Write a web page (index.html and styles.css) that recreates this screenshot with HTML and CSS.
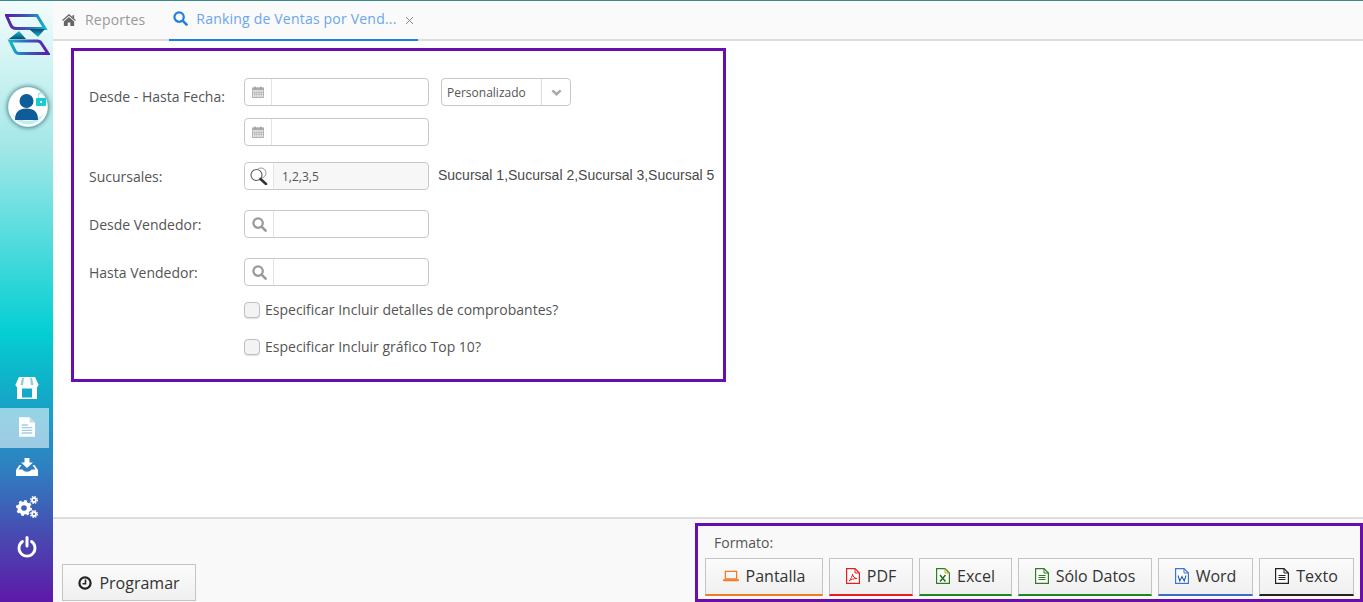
FILE: index.html
```html
<!DOCTYPE html>
<html lang="es">
<head>
<meta charset="utf-8">
<title>Ranking de Ventas por Vendedor</title>
<link rel="stylesheet" href="styles.css">
</head>
<body>
<aside class="sidebar">
  <svg class="logo" viewBox="0 0 45 42" width="45" height="42">
    <defs>
      <linearGradient id="lg1" x1="0" x2="1"><stop offset="0" stop-color="#5a1fa8"/><stop offset=".55" stop-color="#3a5ab8"/><stop offset="1" stop-color="#12b5c9"/></linearGradient>
      <linearGradient id="lg2" x1="0" x2="1"><stop offset="0" stop-color="#12b5c9"/><stop offset=".5" stop-color="#3a5ab8"/><stop offset="1" stop-color="#5a1fa8"/></linearGradient>
      <linearGradient id="lg3" x1="0" x2="0" y1="0" y2="1"><stop offset="0" stop-color="#18c0c8"/><stop offset="1" stop-color="#0a4a78"/></linearGradient>
      <linearGradient id="lg4" x1="0" x2="0" y1="0" y2="1"><stop offset="0" stop-color="#0a4a78"/><stop offset="1" stop-color="#18c0c8"/></linearGradient>
    </defs>
    <path d="M1.500 1.500H32L40 14.500H11Q7.500 14.500 6 11.500Z" fill="none" stroke="url(#lg1)" stroke-width="3"/>
    <path d="M5 27H32.500Q35 27 36.500 29.500L43 39.500H14Q11.500 39.500 10 37Z" fill="none" stroke="url(#lg2)" stroke-width="3"/>
    <path d="M4 25 14 17 21 25Z" fill="url(#lg3)"/>
    <path d="M24 15H40L33 23Z" fill="url(#lg4)"/>
  </svg>
  <div class="avatar">
    <svg viewBox="0 0 40 40" width="40" height="40">
      <circle cx="20" cy="20" r="19.500" fill="#fff"/>
      <path d="M4 26A17 17 0 0 0 36 26 20 20 0 0 1 4 26Z" fill="#bfeef0"/>
      <circle cx="18.500" cy="14" r="7" fill="#0f5c9a"/>
      <path d="M7 33C7 25 11 21.500 18.500 21.500S30 25 30 33Z" fill="#0f5c9a"/>
      <rect x="28" y="11" width="10" height="8" rx="1" fill="#12cdd4"/>
      <path d="M30.500 11V8.500A2.500 2.500 0 0 1 35.500 8.500" fill="none" stroke="#a5e5e8" stroke-width="1.300"/>
      <rect x="32" y="14" width="2" height="2" fill="#fff"/>
    </svg>
  </div>
  <nav class="side-nav">
    <a class="side-item side-store">
      <svg viewBox="0 0 24 24" width="24" height="24"><path d="M4 1H20L23.500 8.500Q23.500 11 21.500 11H2.500Q.5 11 .5 8.500Z" fill="#fff"/><path d="M2 11H22V23H2ZM7 12.500V21.500H17V12.500Z" fill="#fff" fill-rule="evenodd"/><path d="M7 2H9L8 9H5.500ZM15 2H17L18.500 9H16Z" fill="#2aa6c2" opacity=".55"/></svg>
    </a>
    <a class="side-item active">
      <svg viewBox="0 0 18 22" width="16" height="20"><path d="M0 0H12L18 6V22H0Z" fill="#fff"/><path d="M12 0V6H18Z" fill="#bfe0ea"/><path d="M3 8H10V9.500H3ZM3 11H15V12.500H3ZM3 14H15V15.500H3ZM3 17H15V18.500H3Z" fill="#9ccfe0"/></svg>
    </a>
    <a class="side-item">
      <svg viewBox="0 0 22 18" width="22" height="18"><path d="M8.500 0H13.500V4.500H17L11 10 5 4.500H8.500Z" fill="#fff"/><path d="M3.500 7H5.500L2.500 11.500H6.500C8 14.500 14 14.500 15.500 11.500H19.500L16.500 7H18.500L22 12V18H0V12Z" fill="#fff"/></svg>
    </a>
    <a class="side-item">
      <svg viewBox="0 0 22 22" width="22" height="22"><g fill="none" stroke="#fff"><circle cx="8" cy="12" r="4.700" stroke-width="3.800"/><circle cx="8" cy="12" r="7" stroke-width="2" stroke-dasharray="2.800 2.700"/><circle cx="18" cy="4" r="2" stroke-width="1.800"/><circle cx="18" cy="4" r="3.400" stroke-width="1.200" stroke-dasharray="1.600 1.070"/><circle cx="18" cy="18" r="2" stroke-width="1.800"/><circle cx="18" cy="18" r="3.400" stroke-width="1.200" stroke-dasharray="1.600 1.070"/></g></svg>
    </a>
    <a class="side-item">
      <svg viewBox="0 0 20 22" width="20" height="22"><path d="M5.500 5.500A8 8 0 1 0 14.500 5.500" fill="none" stroke="#fff" stroke-width="2.800" stroke-linecap="round"/><path d="M10 1.500V10" stroke="#fff" stroke-width="3" stroke-linecap="round"/></svg>
    </a>
  </nav>
</aside>

<div class="main">
  <header class="tabs">
    <a class="tab">
      <svg class="tab-icon" viewBox="0 0 16 14" width="14" height="12"><path d="M8 0 16 7 15 8.200 8 2 1 8.200 0 7ZM12 1.500H14V5L12 3.500Z" fill="#666"/><path d="M8 3.500 14 8.800V14H9.500V10H6.500V14H2V8.800Z" fill="#666"/></svg>
      <span>Reportes</span>
    </a>
    <a class="tab tab-active">
      <svg class="tab-icon" viewBox="0 0 16 16" width="15" height="15"><circle cx="6.500" cy="6.500" r="5" fill="none" stroke="#2080e0" stroke-width="2.400"/><path d="M10.500 10.500 14.500 14.500" stroke="#2080e0" stroke-width="2.800" stroke-linecap="round"/></svg>
      <span>Ranking de Ventas por Vend...</span>
      <svg class="tab-close" viewBox="0 0 9 9" width="9" height="9"><path d="M1 1 8 8M8 1 1 8" stroke="#888" stroke-width="1" fill="none"/></svg>
    </a>
  </header>

  <section class="content">
    <form class="panel">
      <div class="row row-date">
        <label class="lbl">Desde - Hasta Fecha:</label>
        <div class="field">
          <span class="addon addon-cal"><svg viewBox="0 0 13 13" width="12" height="12"><path d="M.5 2H12.500V12.500H.5Z" fill="#eee" stroke="#aaa"/><path d="M.5 2H12.500V4.500H.5Z" fill="#aaa"/><path d="M3 5V12M5.300 5V12M7.700 5V12M10 5V12M1 7H12M1 9H12" stroke="#aaa" stroke-width=".7"/><path d="M3.500 .5V3M9.500 .5V3" stroke="#999" stroke-width="1.200"/></svg></span>
          <span class="value"></span>
        </div>
        <div class="select">
          <span class="select-text">Personalizado</span>
          <span class="select-btn"><svg viewBox="0 0 12 8" width="11" height="7"><path d="M1.200 1.500 6 6 10.800 1.500" fill="none" stroke="#aaa" stroke-width="2.800"/></svg></span>
        </div>
      </div>
      <div class="row row-date2">
        <span class="lbl"></span>
        <div class="field">
          <span class="addon addon-cal"><svg viewBox="0 0 13 13" width="12" height="12"><path d="M.5 2H12.500V12.500H.5Z" fill="#eee" stroke="#aaa"/><path d="M.5 2H12.500V4.500H.5Z" fill="#aaa"/><path d="M3 5V12M5.300 5V12M7.700 5V12M10 5V12M1 7H12M1 9H12" stroke="#aaa" stroke-width=".7"/><path d="M3.500 .5V3M9.500 .5V3" stroke="#999" stroke-width="1.200"/></svg></span>
          <span class="value"></span>
        </div>
      </div>
      <div class="row row-suc">
        <label class="lbl">Sucursales:</label>
        <div class="field field-ro">
          <span class="addon addon-white"><svg viewBox="0 0 20 18" width="20" height="18"><circle cx="12" cy="6" r="5" fill="#fff" stroke="#999"/><circle cx="7.500" cy="8" r="5.500" fill="#fff" stroke="#666" stroke-width="1.200"/><path d="M11.500 12 17 17" stroke="#333" stroke-width="2.600" stroke-linecap="round"/></svg></span>
          <span class="value value-text">1,2,3,5</span>
        </div>
        <span class="desc">Sucursal 1,Sucursal 2,Sucursal 3,Sucursal 5</span>
      </div>
      <div class="row row-vend">
        <label class="lbl">Desde Vendedor:</label>
        <div class="field">
          <span class="addon"><svg viewBox="0 0 16 16" width="15" height="15"><circle cx="6.500" cy="6.500" r="5" fill="none" stroke="#999" stroke-width="2.400"/><path d="M10.500 10.500 14.500 14.500" stroke="#999" stroke-width="2.800" stroke-linecap="round"/></svg></span>
          <span class="value"></span>
        </div>
      </div>
      <div class="row row-vend">
        <label class="lbl">Hasta Vendedor:</label>
        <div class="field">
          <span class="addon"><svg viewBox="0 0 16 16" width="15" height="15"><circle cx="6.500" cy="6.500" r="5" fill="none" stroke="#999" stroke-width="2.400"/><path d="M10.500 10.500 14.500 14.500" stroke="#999" stroke-width="2.800" stroke-linecap="round"/></svg></span>
          <span class="value"></span>
        </div>
      </div>
      <div class="check check-first"><span class="box"></span><span class="check-text">Especificar Incluir detalles de comprobantes?</span></div>
      <div class="check"><span class="box"></span><span class="check-text">Especificar Incluir gráfico Top 10?</span></div>
    </form>
  </section>

  <footer class="footer">
    <button class="btn btn-prog" type="button">
      <svg viewBox="0 0 14 14" width="14" height="14"><circle cx="7" cy="7" r="5.600" fill="none" stroke="#222" stroke-width="2.200"/><path d="M7.500 3.500V7.800H4.500" fill="none" stroke="#222" stroke-width="1.600"/></svg>
      <span>Programar</span>
    </button>
    <div class="formats">
      <div class="formats-title">Formato:</div>
      <div class="format-btns">
        <button class="btn fmt fmt-pantalla" type="button">
          <svg viewBox="0 0 17 12" width="16" height="12"><path d="M2.500 1H14.500V9H2.500Z" fill="none" stroke="#f47a20" stroke-width="1.300"/><path d="M0 9.500H17V10.500Q17 11.500 16 11.500H1Q0 11.500 0 10.500Z" fill="#f47a20"/></svg>
          <span>Pantalla</span>
        </button>
        <button class="btn fmt fmt-pdf" type="button">
          <svg viewBox="0 0 14 16" width="14" height="16"><path d="M.6.600H9L13.400 5V15.400H.6Z" fill="#fff" stroke="#e02020" stroke-width="1.200"/><path d="M9 .6V5H13.400" fill="none" stroke="#e02020"/><path d="M3 13C5 11 6.500 8 6.500 6 7 9 8.500 10 11 10.500 8 10.500 5 11.500 3 13Z" fill="none" stroke="#e02020"/></svg>
          <span>PDF</span>
        </button>
        <button class="btn fmt fmt-excel" type="button">
          <svg viewBox="0 0 14 16" width="14" height="16"><path d="M.6.600H9L13.400 5V15.400H.6Z" fill="#fff" stroke="#2e7d20" stroke-width="1.200"/><path d="M9 .6V5H13.400" fill="none" stroke="#c8a020"/><path d="M4 7 9.500 13.500M9.500 7 4 13.500" stroke="#207020" stroke-width="1.500"/></svg>
          <span>Excel</span>
        </button>
        <button class="btn fmt fmt-datos" type="button">
          <svg viewBox="0 0 14 16" width="14" height="16"><path d="M.6.600H9L13.400 5V15.400H.6Z" fill="#fff" stroke="#2e7d20" stroke-width="1.200"/><path d="M9 .6V5H13.400" fill="none" stroke="#2e7d20"/><path d="M3.500 7.500H10.500M3.500 9.500H10.500M3.500 11.500H10.500" stroke="#2e7d20"/></svg>
          <span>Sólo Datos</span>
        </button>
        <button class="btn fmt fmt-word" type="button">
          <svg viewBox="0 0 14 16" width="14" height="16"><path d="M.6.600H9L13.400 5V15.400H.6Z" fill="#fff" stroke="#3a76d0" stroke-width="1.200"/><path d="M9 .6V5H13.400" fill="none" stroke="#3a76d0"/><path d="M3 7.500 4.800 13 7 8.500 9.200 13 11 7.500" fill="none" stroke="#2a5cac" stroke-width="1.100"/></svg>
          <span>Word</span>
        </button>
        <button class="btn fmt fmt-texto" type="button">
          <svg viewBox="0 0 14 16" width="14" height="16"><path d="M.6.600H9L13.400 5V15.400H.6Z" fill="#fff" stroke="#222" stroke-width="1.200"/><path d="M9 .6V5H13.400" fill="none" stroke="#222"/><path d="M3.500 7.500H10.500M3.500 9.500H10.500M3.500 11.500H10.500" stroke="#222"/></svg>
          <span>Texto</span>
        </button>
      </div>
    </div>
  </footer>
</div>
</body>
</html>
```
FILE: styles.css
```css
* { box-sizing: border-box; }
html, body { height: 100%; }
body {
  margin: 0;
  display: flex;
  height: 602px;
  overflow: hidden;
  font-family: "Open Sans", sans-serif;
  font-size: 14px;
  color: #555;
  background: #fff;
  border-top: 1px solid #3a8a8c;
}
.sidebar {
  width: 53px;
  flex: none;
  margin-top: -1px;
  display: flex;
  flex-direction: column;
  align-items: stretch;
  background: linear-gradient(180deg, #f4fcfc 0%, #a5e8e8 24%, #05cfd3 55%, #10afc8 64%, #2f7fc0 78%, #4a45b0 90%, #5d1aa8 100%);
}
.logo { margin: 14px 0 0 5px; }
.avatar {
  width: 40px;
  height: 40px;
  margin: 31px 0 0 8px;
  border-radius: 50%;
  box-shadow: 0 0 4px 1px rgba(0, 40, 60, .55);
}
.avatar svg { display: block; }
.side-nav { margin-top: 241px; display: flex; flex-direction: column; }
.side-item {
  height: 40px;
  width: 49px;
  display: flex;
  align-items: center;
  justify-content: center;
  padding: 0 0 2px 5px;
}
.side-store { padding-bottom: 0; }
.side-item.active { background: rgba(255, 255, 255, .55); }
.main { flex: 1; min-width: 0; display: flex; flex-direction: column; }
.tabs {
  height: 40px;
  flex: none;
  display: flex;
  align-items: stretch;
  padding-left: 8px;
  gap: 24px;
  background: #fafafa;
  border-bottom: 2px solid #ddd;
}
.tab {
  display: flex;
  align-items: center;
  height: 40px;
  padding: 0 0 3px 1px;
  color: #999;
  font-size: 14px;
  gap: 9px;
  letter-spacing: .2px;
}
.tab-active {
  width: 249px;
  padding: 0 0 3px 4px;
  color: #6aa6ec;
  border-bottom: 2px solid #2080e0;
  gap: 8px;
}
.tab-close { margin-left: 0; margin-top: 3px; }
.content { flex: 1; min-height: 0; padding: 7px 0 0 18px; }
.panel {
  width: 655px;
  height: 334px;
  border: 3px solid #6a0dad;
  padding: 27px 0 0 15px;
}
.row { display: flex; align-items: center; height: 28px; }
.row-date2 { margin-top: 12px; }
.row-suc { margin-top: 16px; }
.row-vend { margin-top: 20px; }
.lbl { width: 155px; flex: none; color: #555; font-size: 14px; padding-top: 1px; }
.row-date .lbl { padding-top: 9px; }
.field {
  width: 185px;
  height: 28px;
  flex: none;
  display: flex;
  border: 1px solid #c8c8c8;
  border-radius: 4px;
  background: #fff;
}
.addon {
  width: 29px;
  flex: none;
  display: flex;
  align-items: center;
  justify-content: center;
  border-right: 1px solid #e4e4e4;
}
.addon-cal { width: 27px; }
.addon-white { background: #fff; border-radius: 4px 0 0 4px; }
.value { flex: 1; }
.field-ro { background: #f7f7f7; }
.value-text { padding: 5px 0 0 8px; font-size: 12px; color: #555; line-height: 18px; }
.desc { margin-left: 9px; font-family: "Liberation Sans", sans-serif; font-size: 14px; color: #4a4a4a; white-space: nowrap; margin-top: -2px; }
.select {
  width: 130px;
  height: 28px;
  margin-left: 12px;
  display: flex;
  border: 1px solid #c8c8c8;
  border-radius: 4px;
}
.select-text { flex: 1; padding-left: 5px; font-size: 12px; line-height: 28px; color: #555; }
.select-btn {
  width: 29px;
  display: flex;
  align-items: center;
  justify-content: center;
  border-left: 1px solid #ddd;
}
.check { display: flex; align-items: center; height: 16px; margin: 21px 0 0 155px; gap: 5px; font-size: 14px; color: #555; white-space: nowrap; }
.check-first { margin-top: 16px; }
.check-text { margin-top: -2px; }
.box {
  width: 16px;
  height: 16px;
  border: 1px solid #c0c0c0;
  border-radius: 4px;
  background: #f3f3f3;
  box-shadow: 0 1px 1px rgba(0, 0, 0, .12);
}
.footer {
  height: 85px;
  flex: none;
  display: flex;
  align-items: flex-end;
  justify-content: space-between;
  padding-left: 9px;
  background: #f9f9f9;
  border-top: 2px solid #ddd;
}
.btn {
  display: flex;
  align-items: center;
  justify-content: center;
  gap: 7px;
  height: 38px;
  padding: 0;
  font: 16px "Open Sans", sans-serif;
  color: #333;
  background: linear-gradient(180deg, #fbfbfb, #f0f0f0);
  border: 1px solid #c4c4c4;
  border-radius: 0;
}
.btn-prog { width: 134px; height: 37px; margin-bottom: 1px; }
.formats {
  width: 668px;
  height: 79px;
  border: 3px solid #6a0dad;
  padding: 8px 0 0 7px;
}
.formats-title { font-size: 14px; color: #555; padding-left: 9px; line-height: 18px; height: 24px; }
.format-btns { display: flex; gap: 6px; }
.fmt { border-bottom-width: 2px; padding-bottom: 1px; }
.fmt-pantalla { width: 118px; border-bottom-color: #f47a20; }
.fmt-pdf { width: 84px; border-bottom-color: #e02020; }
.fmt-excel { width: 93px; border-bottom-color: #1a8a20; }
.fmt-datos { width: 134px; border-bottom-color: #1a8a20; }
.fmt-word { width: 95px; border-bottom-color: #3a6cc0; }
.fmt-texto { width: 95px; border-bottom-color: #222; }
```
